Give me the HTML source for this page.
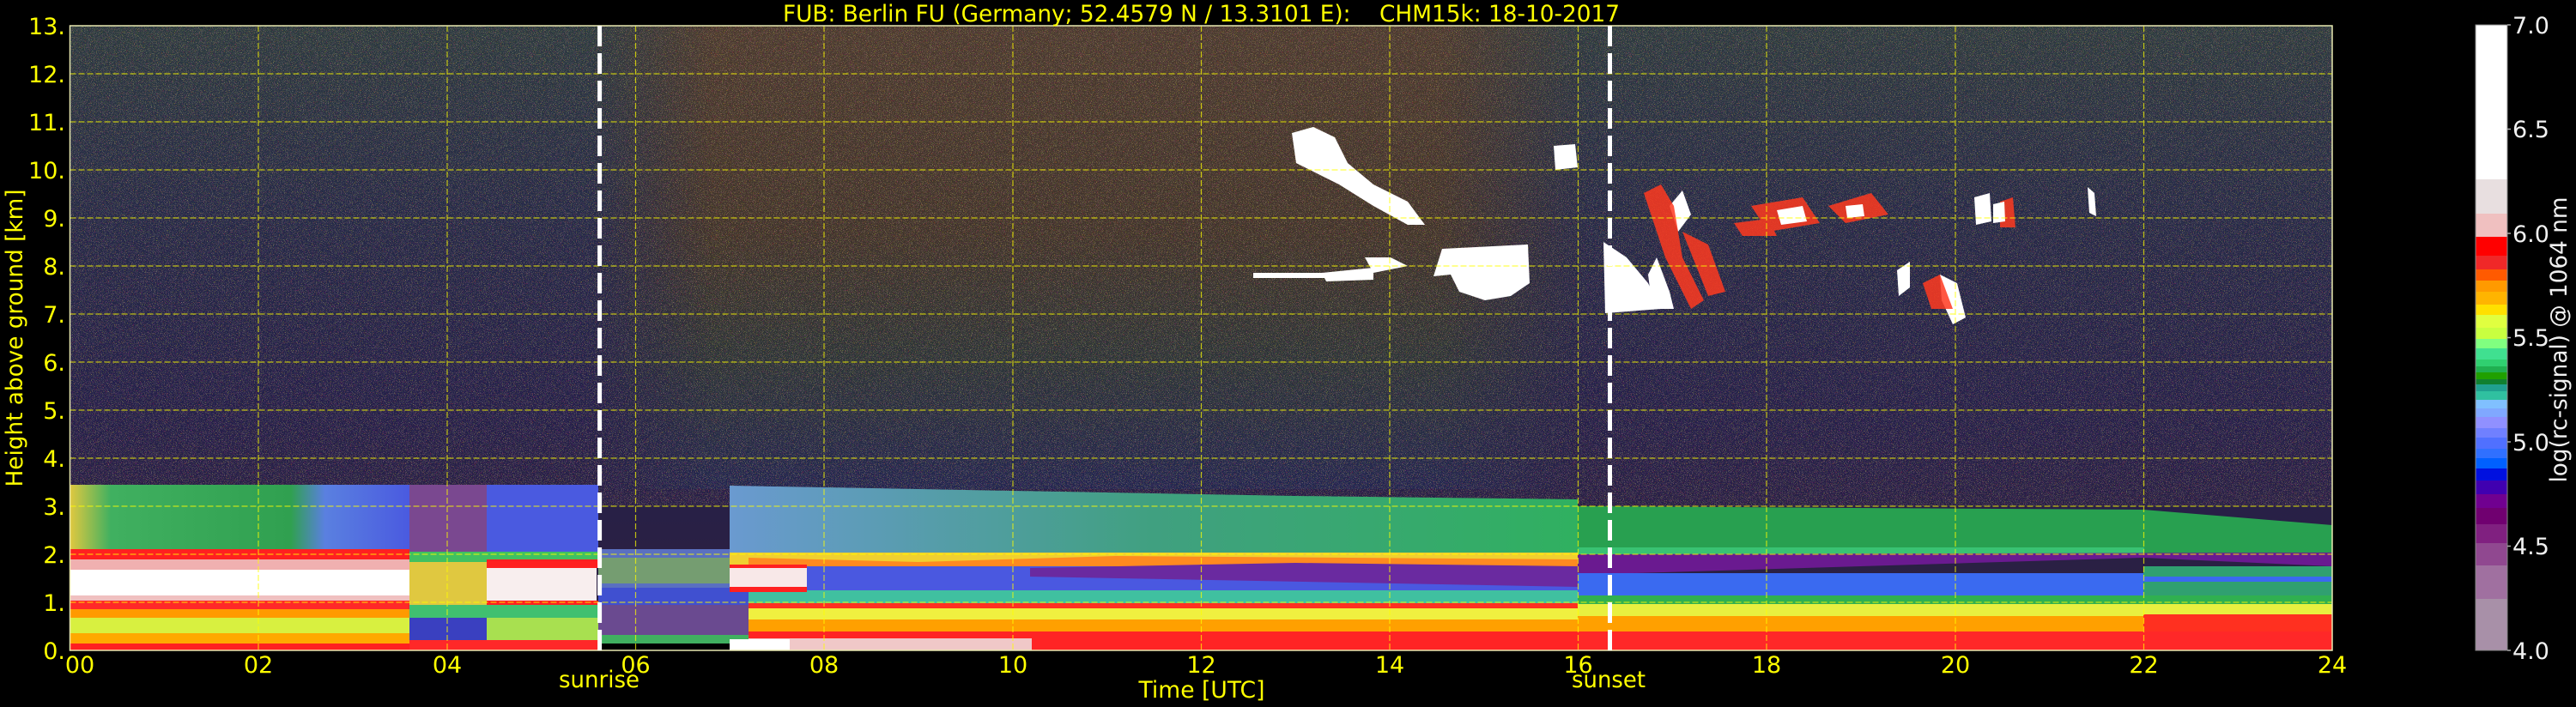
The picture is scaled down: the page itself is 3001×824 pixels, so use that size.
<!DOCTYPE html>
<html><head><meta charset="utf-8"><style>
html,body{margin:0;padding:0;background:#000;width:3001px;height:824px;overflow:hidden}
svg{display:block}
text{font-family:"DejaVu Sans","Liberation Sans",sans-serif}
</style></head><body>
<svg width="3001" height="824" viewBox="0 0 3001 824" xmlns="http://www.w3.org/2000/svg">
<defs>
<linearGradient id="night" x1="0" y1="0" x2="0" y2="1">
<stop offset="0" stop-color="#2c3a40"/><stop offset="0.3" stop-color="#252a48"/>
<stop offset="0.62" stop-color="#24204a"/><stop offset="1" stop-color="#2e2040"/></linearGradient>
<linearGradient id="day" x1="0" y1="0" x2="0" y2="1">
<stop offset="0" stop-color="#4a3a30"/><stop offset="0.45" stop-color="#40342c"/>
<stop offset="0.72" stop-color="#2c3438"/><stop offset="1" stop-color="#222650"/></linearGradient>
<linearGradient id="dayfade" x1="0" y1="0" x2="1" y2="0">
<stop offset="0" stop-color="#fff" stop-opacity="0"/><stop offset="0.12" stop-color="#fff"/>
<stop offset="0.85" stop-color="#fff"/><stop offset="1" stop-color="#fff" stop-opacity="0"/></linearGradient>
<mask id="dm"><rect x="690" y="30" width="1160" height="540" fill="url(#dayfade)"/></mask>
<linearGradient id="greenA" x1="0" y1="0" x2="1" y2="0">
<stop offset="0" stop-color="#e0c840"/><stop offset="0.12" stop-color="#40b060"/>
<stop offset="0.65" stop-color="#30a050"/><stop offset="0.75" stop-color="#5a80e0"/><stop offset="1" stop-color="#4a5ae0"/></linearGradient>
<linearGradient id="greenD" x1="0" y1="0" x2="1" y2="0">
<stop offset="0" stop-color="#6a9ad0"/><stop offset="0.5" stop-color="#40a080"/><stop offset="1" stop-color="#30b060"/></linearGradient>
<filter id="nz" x="0" y="0" width="100%" height="100%">
<feTurbulence type="fractalNoise" baseFrequency="1.2" numOctaves="1" seed="7"/>
<feColorMatrix type="matrix" values="3 0 0 0 -1  0 3 0 0 -1  0 0 3 0 -0.9  1.6 0 -1.6 0 0.25"/>
<feComponentTransfer><feFuncA type="discrete" tableValues="0 0 0.5 0.9 1"/></feComponentTransfer>
</filter>
</defs>
<rect width="3001" height="824" fill="#000"/>
<rect x="81.5" y="30" width="2635.5" height="728" fill="url(#night)"/>
<rect x="690" y="30" width="1160" height="540" fill="url(#day)" mask="url(#dm)"/>
<rect x="81.5" y="30" width="2635.5" height="560" filter="url(#nz)" opacity="0.5"/>

<!-- Segment A -->
<rect x="81.5" y="565" width="396" height="76" fill="url(#greenA)"/>
<rect x="81.5" y="640" width="396" height="12" fill="#ff2020"/>
<rect x="81.5" y="652" width="396" height="14" fill="#f0b0b0"/>
<rect x="81.5" y="664" width="396" height="32" fill="#ffffff"/>
<rect x="81.5" y="694" width="396" height="8" fill="#f0c0c0"/>
<rect x="81.5" y="700" width="396" height="10" fill="#ff2828"/>
<rect x="81.5" y="710" width="396" height="10" fill="#ff9a00"/>
<rect x="81.5" y="720" width="396" height="20" fill="#d8f040"/>
<rect x="81.5" y="738" width="396" height="12" fill="#ffa800"/>
<rect x="81.5" y="750" width="396" height="8" fill="#ff2020"/>
<!-- Segment B -->
<rect x="477" y="565" width="90" height="78" fill="#7a4890"/>
<rect x="567" y="565" width="130" height="78" fill="#4a5ae0"/>
<rect x="477" y="643" width="220" height="16" fill="#40c060"/>
<rect x="477" y="655" width="90" height="50" fill="#e0c840"/>
<rect x="567" y="652" width="130" height="10" fill="#ff2020"/>
<rect x="567" y="662" width="128" height="40" fill="#f8eeee"/>
<rect x="567" y="700" width="130" height="8" fill="#ff2020"/>
<rect x="477" y="705" width="220" height="16" fill="#40c070"/>
<rect x="477" y="720" width="90" height="28" fill="#3a40c0"/>
<rect x="567" y="720" width="130" height="28" fill="#a8e050"/>
<rect x="477" y="746" width="220" height="12" fill="#ff2828"/>
<!-- Segment C -->
<rect x="697" y="640" width="175" height="45" fill="#5a70c0"/>
<rect x="697" y="650" width="175" height="30" fill="#80b050" opacity="0.7"/>
<rect x="697" y="705" width="175" height="35" fill="#6a4a90"/>
<rect x="697" y="685" width="175" height="20" fill="#4050d0"/>
<rect x="697" y="740" width="175" height="10" fill="#40b060"/>
<rect x="697" y="750" width="175" height="8" fill="#000"/>
<!-- Segment D -->
<polygon points="850,566 1070,570 1509,578 1838,582 1838,646 850,646" fill="url(#greenD)"/>
<rect x="850" y="644" width="988" height="14" fill="#f0d030"/>
<polygon points="872,650 1070,655 1300,648 1838,652 1838,664 872,664" fill="#ff8a20"/>
<rect x="872" y="660" width="966" height="30" fill="#4a58e0"/>
<polygon points="1200,662 1509,656 1838,660 1838,684 1200,672" fill="#6a2aa0"/>
<rect x="872" y="688" width="966" height="16" fill="#40c0a0"/>
<rect x="872" y="703" width="966" height="6" fill="#ff3020"/>
<rect x="872" y="709" width="966" height="13" fill="#f0f040"/>
<rect x="872" y="722" width="966" height="16" fill="#ffa000"/>
<rect x="872" y="736" width="966" height="22" fill="#ff2424"/>
<rect x="872" y="744" width="330" height="14" fill="#f0c8c8"/>
<rect x="850" y="662" width="90" height="22" fill="#f8e8e8"/>
<rect x="850" y="658" width="90" height="4" fill="#ff2020"/>
<rect x="850" y="684" width="90" height="6" fill="#ff2020"/>
<rect x="850" y="745" width="70" height="13" fill="#fff"/>
<!-- Segment E -->
<polygon points="1838,590 2497,594 2717,612 2717,646 1838,646" fill="#28a050"/>
<rect x="1838" y="638" width="660" height="8" fill="#40d080" opacity="0.7"/>
<polygon points="1838,646 2717,644 2717,660 2497,650 1838,670" fill="#6a1a90"/>
<rect x="1838" y="668" width="660" height="28" fill="#3a6af0"/>
<rect x="2497" y="660" width="220" height="36" fill="#30a070"/>
<rect x="2497" y="672" width="220" height="6" fill="#3a6af0"/>
<rect x="1838" y="694" width="879" height="10" fill="#30b050"/>
<rect x="1838" y="704" width="879" height="14" fill="#e8f040"/>
<rect x="1838" y="718" width="879" height="20" fill="#ffa000"/>
<rect x="1838" y="736" width="879" height="22" fill="#ff2828"/>
<rect x="2497" y="716" width="220" height="20" fill="#ff3020"/>

<!-- clouds -->
<g fill="#fff">
<path d="M1505,155 L1530,148 L1555,160 L1570,190 L1600,215 L1640,235 L1660,262 L1640,262 L1600,240 L1560,215 L1530,200 L1510,190 Z"/>
<path d="M1590,300 L1620,300 L1640,310 L1600,318 Z"/>
<path d="M1680,290 L1780,285 L1782,330 L1760,345 L1730,350 L1700,340 L1690,320 L1670,322 Z"/>
<rect x="1460" y="318" width="90" height="6"/>
<path d="M1540,318 L1600,312 L1600,326 L1545,328 Z"/>
<path d="M1810,170 L1835,168 L1838,195 L1812,198 Z"/>
<path d="M1868,282 L1880,290 L1895,300 L1920,330 L1935,360 L1870,365 Z"/>
<path d="M1920,320 L1930,300 L1945,340 L1950,360 L1925,360 Z"/>
<path d="M1945,240 L1960,222 L1970,250 L1955,270 Z"/>
<path d="M2210,315 L2225,305 L2225,335 L2212,345 Z"/>
<path d="M2260,320 L2280,330 L2290,370 L2275,378 L2262,350 Z"/>
<path d="M2300,230 L2318,225 L2320,258 L2302,262 Z"/>
<path d="M2432,218 L2440,225 L2442,252 L2434,248 Z"/>
</g>
<g fill="#ff3a20" opacity="0.85">
<path d="M1915,225 L1935,215 L1950,240 L1960,300 L1985,350 L1970,360 L1940,300 Z"/>
<path d="M1960,270 L1990,285 L2010,340 L1990,345 Z"/>
<path d="M2040,240 L2100,230 L2120,260 L2060,270 Z"/>
<path d="M2130,240 L2180,225 L2200,250 L2150,260 Z"/>
<path d="M2020,260 L2060,255 L2070,275 L2030,275 Z"/>
<path d="M2240,330 L2260,320 L2275,360 L2250,360 Z"/>
<path d="M2330,235 L2345,230 L2348,265 L2330,265 Z"/>
</g>
<g fill="#fff">
<path d="M2070,245 L2100,240 L2105,258 L2075,262 Z"/>
<path d="M2150,240 L2170,238 L2172,252 L2152,254 Z"/>
<path d="M2322,238 L2335,235 L2336,258 L2322,260 Z"/>
</g>

<!-- grid -->
<g stroke="#ffff00" stroke-width="1.2" stroke-dasharray="7 3" opacity="0.7">
<line x1="81.5" x2="2717" y1="86" y2="86"/><line x1="81.5" x2="2717" y1="142" y2="142"/>
<line x1="81.5" x2="2717" y1="198" y2="198"/><line x1="81.5" x2="2717" y1="254" y2="254"/>
<line x1="81.5" x2="2717" y1="310" y2="310"/><line x1="81.5" x2="2717" y1="366" y2="366"/>
<line x1="81.5" x2="2717" y1="422" y2="422"/><line x1="81.5" x2="2717" y1="478" y2="478"/>
<line x1="81.5" x2="2717" y1="534" y2="534"/><line x1="81.5" x2="2717" y1="590" y2="590"/>
<line x1="81.5" x2="2717" y1="646" y2="646"/><line x1="81.5" x2="2717" y1="702" y2="702"/>
<line y1="30" y2="758" x1="301" x2="301"/><line y1="30" y2="758" x1="521" x2="521"/>
<line y1="30" y2="758" x1="740.5" x2="740.5"/><line y1="30" y2="758" x1="960" x2="960"/>
<line y1="30" y2="758" x1="1180" x2="1180"/><line y1="30" y2="758" x1="1399.5" x2="1399.5"/>
<line y1="30" y2="758" x1="1619" x2="1619"/><line y1="30" y2="758" x1="1838.5" x2="1838.5"/>
<line y1="30" y2="758" x1="2058" x2="2058"/><line y1="30" y2="758" x1="2278" x2="2278"/>
<line y1="30" y2="758" x1="2497.5" x2="2497.5"/>
</g>
<rect x="81.5" y="30" width="2635.5" height="728" fill="none" stroke="#e8e8b0" stroke-width="1.5"/>
<line x1="698.6" x2="698.6" y1="30" y2="758" stroke="#fff" stroke-width="5" stroke-dasharray="24 8"/>
<line x1="1875.5" x2="1875.5" y1="30" y2="758" stroke="#fff" stroke-width="5" stroke-dasharray="24 8"/>

<text x="912" y="25" fill="#ffff00" font-size="27" textLength="975" lengthAdjust="spacingAndGlyphs" xml:space="preserve">FUB: Berlin FU (Germany; 52.4579 N / 13.3101 E):    CHM15k: 18-10-2017</text>

<g fill="#ffff00" font-size="27" text-anchor="end">
<text x="76" y="40">13.</text><text x="76" y="96">12.</text><text x="76" y="152">11.</text>
<text x="76" y="208">10.</text><text x="76" y="264">9.</text><text x="76" y="320">8.</text>
<text x="76" y="376">7.</text><text x="76" y="432">6.</text><text x="76" y="488">5.</text>
<text x="76" y="544">4.</text><text x="76" y="600">3.</text><text x="76" y="656">2.</text>
<text x="76" y="712">1.</text><text x="76" y="768">0.</text>
</g>
<g fill="#ffff00" font-size="27" text-anchor="middle">
<text x="93" y="784">00</text><text x="301" y="784">02</text><text x="521" y="784">04</text>
<text x="740.5" y="784">06</text><text x="960" y="784">08</text><text x="1180" y="784">10</text>
<text x="1399.5" y="784">12</text><text x="1619" y="784">14</text><text x="1838.5" y="784">16</text>
<text x="2058" y="784">18</text><text x="2278" y="784">20</text><text x="2497.5" y="784">22</text>
<text x="2717" y="784">24</text>
<text x="698" y="801" textLength="94" lengthAdjust="spacingAndGlyphs">sunrise</text>
<text x="1874" y="801" textLength="86" lengthAdjust="spacingAndGlyphs">sunset</text>
<text x="1400" y="813" textLength="147" lengthAdjust="spacingAndGlyphs">Time [UTC]</text>
</g>
<text transform="translate(26,394) rotate(-90)" fill="#ffff00" font-size="27" text-anchor="middle" textLength="347" lengthAdjust="spacingAndGlyphs">Height above ground [km]</text>

<g>
<rect x="2884" y="29" width="37" height="180" fill="#ffffff"/>
<rect x="2884" y="209" width="37" height="40" fill="#e8dfe0"/>
<rect x="2884" y="249" width="37" height="27" fill="#f0c0c0"/>
<rect x="2884" y="276" width="37" height="22" fill="#ff0000"/>
<rect x="2884" y="298" width="37" height="16" fill="#f02828"/>
<rect x="2884" y="314" width="37" height="13" fill="#ff5a00"/>
<rect x="2884" y="327" width="37" height="13" fill="#ff9a00"/>
<rect x="2884" y="340" width="37" height="15" fill="#ffb400"/>
<rect x="2884" y="355" width="37" height="12" fill="#ffe000"/>
<rect x="2884" y="367" width="37" height="15" fill="#e0ff40"/>
<rect x="2884" y="382" width="37" height="13" fill="#c8ff40"/>
<rect x="2884" y="395" width="37" height="11" fill="#80ff80"/>
<rect x="2884" y="406" width="37" height="13" fill="#40e090"/>
<rect x="2884" y="419" width="37" height="8" fill="#30d070"/>
<rect x="2884" y="427" width="37" height="7" fill="#20b050"/>
<rect x="2884" y="434" width="37" height="8" fill="#20a000"/>
<rect x="2884" y="442" width="37" height="6" fill="#108030"/>
<rect x="2884" y="448" width="37" height="8" fill="#20a090"/>
<rect x="2884" y="456" width="37" height="10" fill="#30c0a0"/>
<rect x="2884" y="466" width="37" height="10" fill="#80c0ff"/>
<rect x="2884" y="476" width="37" height="10" fill="#80a8ff"/>
<rect x="2884" y="486" width="37" height="13" fill="#9090ff"/>
<rect x="2884" y="499" width="37" height="11" fill="#7080ff"/>
<rect x="2884" y="510" width="37" height="13" fill="#5070ff"/>
<rect x="2884" y="523" width="37" height="11" fill="#3070ff"/>
<rect x="2884" y="534" width="37" height="12" fill="#0060ff"/>
<rect x="2884" y="546" width="37" height="14" fill="#0010e0"/>
<rect x="2884" y="560" width="37" height="16" fill="#4000b0"/>
<rect x="2884" y="576" width="37" height="16" fill="#700090"/>
<rect x="2884" y="592" width="37" height="19" fill="#700070"/>
<rect x="2884" y="611" width="37" height="22" fill="#802080"/>
<rect x="2884" y="633" width="37" height="26" fill="#904890"/>
<rect x="2884" y="659" width="37" height="39" fill="#a070a0"/>
<rect x="2884" y="698" width="37" height="60" fill="#a890a8"/>
<rect x="2884" y="29" width="37" height="729" fill="none" stroke="#888" stroke-width="1"/>
<g stroke="#aaa" stroke-width="1.5">
<line x1="2921" x2="2925" y1="29" y2="29"/><line x1="2921" x2="2925" y1="150.5" y2="150.5"/>
<line x1="2921" x2="2925" y1="272" y2="272"/><line x1="2921" x2="2925" y1="393.5" y2="393.5"/>
<line x1="2921" x2="2925" y1="515" y2="515"/><line x1="2921" x2="2925" y1="636.5" y2="636.5"/>
<line x1="2921" x2="2925" y1="758" y2="758"/>
</g>
<g fill="#f0f0f0" font-size="27">
<text x="2927" y="39">7.0</text><text x="2927" y="160">6.5</text><text x="2927" y="282">6.0</text>
<text x="2927" y="403">5.5</text><text x="2927" y="525">5.0</text><text x="2927" y="646">4.5</text>
<text x="2927" y="768">4.0</text>
</g>
<text transform="translate(2990,396) rotate(-90)" fill="#f0f0f0" font-size="27" text-anchor="middle" textLength="333" lengthAdjust="spacingAndGlyphs">log(rc-signal) @ 1064 nm</text>
</g>
</svg>
</body></html>
